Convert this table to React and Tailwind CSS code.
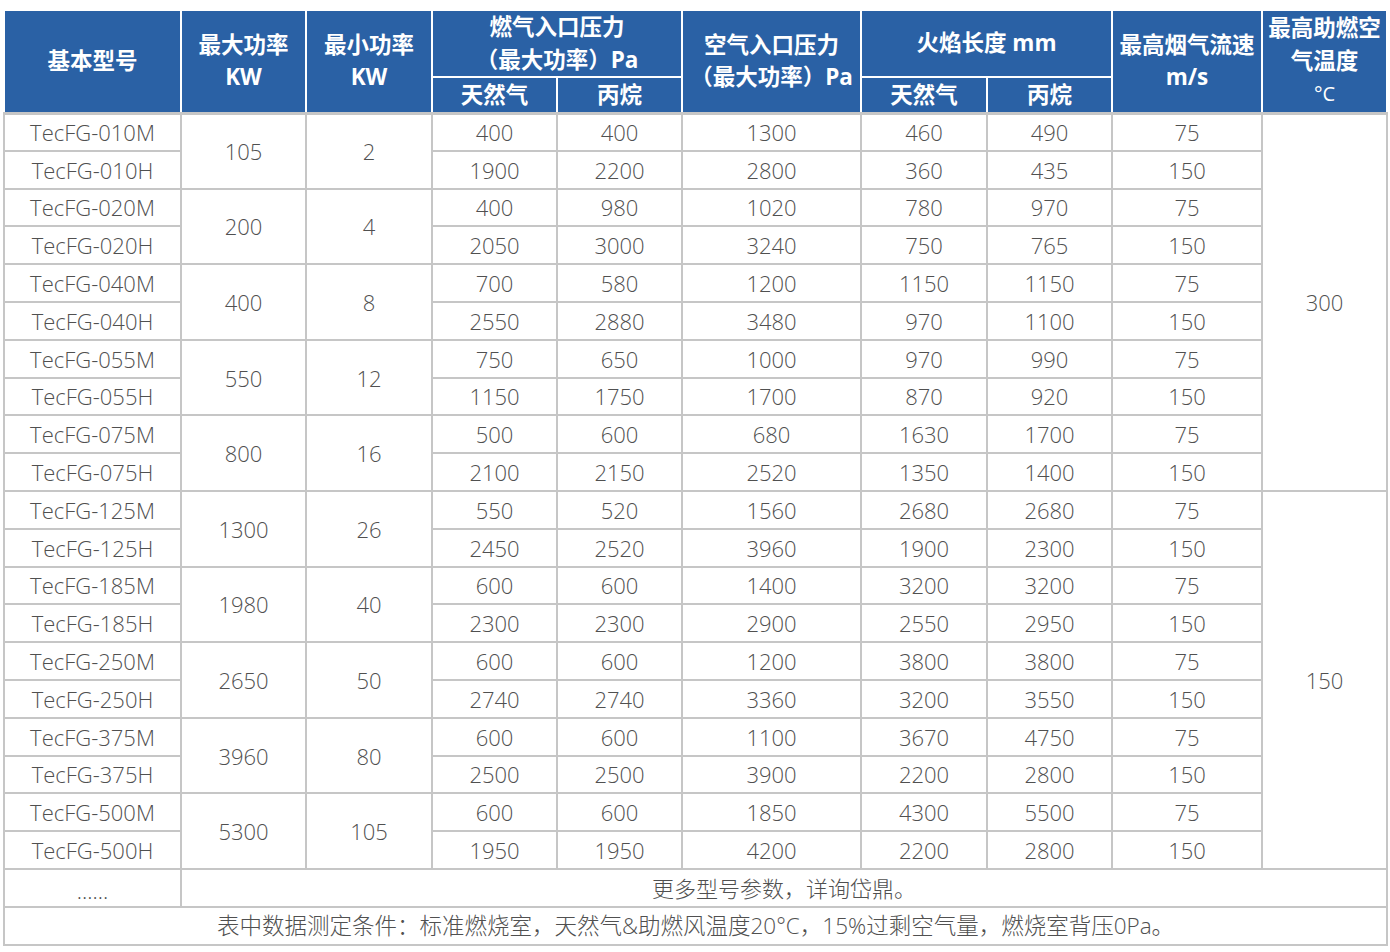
import React from 'react'

const groups = [
  { kwMax: '105', kwMin: '2', rows: [
    ['TecFG-010M', '400', '400', '1300', '460', '490', '75'],
    ['TecFG-010H', '1900', '2200', '2800', '360', '435', '150'],
  ] },
  { kwMax: '200', kwMin: '4', rows: [
    ['TecFG-020M', '400', '980', '1020', '780', '970', '75'],
    ['TecFG-020H', '2050', '3000', '3240', '750', '765', '150'],
  ] },
  { kwMax: '400', kwMin: '8', rows: [
    ['TecFG-040M', '700', '580', '1200', '1150', '1150', '75'],
    ['TecFG-040H', '2550', '2880', '3480', '970', '1100', '150'],
  ] },
  { kwMax: '550', kwMin: '12', rows: [
    ['TecFG-055M', '750', '650', '1000', '970', '990', '75'],
    ['TecFG-055H', '1150', '1750', '1700', '870', '920', '150'],
  ] },
  { kwMax: '800', kwMin: '16', rows: [
    ['TecFG-075M', '500', '600', '680', '1630', '1700', '75'],
    ['TecFG-075H', '2100', '2150', '2520', '1350', '1400', '150'],
  ] },
  { kwMax: '1300', kwMin: '26', rows: [
    ['TecFG-125M', '550', '520', '1560', '2680', '2680', '75'],
    ['TecFG-125H', '2450', '2520', '3960', '1900', '2300', '150'],
  ] },
  { kwMax: '1980', kwMin: '40', rows: [
    ['TecFG-185M', '600', '600', '1400', '3200', '3200', '75'],
    ['TecFG-185H', '2300', '2300', '2900', '2550', '2950', '150'],
  ] },
  { kwMax: '2650', kwMin: '50', rows: [
    ['TecFG-250M', '600', '600', '1200', '3800', '3800', '75'],
    ['TecFG-250H', '2740', '2740', '3360', '3200', '3550', '150'],
  ] },
  { kwMax: '3960', kwMin: '80', rows: [
    ['TecFG-375M', '600', '600', '1100', '3670', '4750', '75'],
    ['TecFG-375H', '2500', '2500', '3900', '2200', '2800', '150'],
  ] },
  { kwMax: '5300', kwMin: '105', rows: [
    ['TecFG-500M', '600', '600', '1850', '4300', '5500', '75'],
    ['TecFG-500H', '1950', '1950', '4200', '2200', '2800', '150'],
  ] },
]

const th = 'border-2 border-white bg-[#2a61a5] text-white font-bold text-[22.5px] leading-[32.5px] p-0 align-middle'
const td = 'border-2 border-[#c6c6c6] p-0 text-center align-middle leading-[24px]'

export default function App() {
  return (
    <div className="bg-white w-[1390px] h-[952px] pt-[9px] pl-[3px]">
      <table
        className="table-fixed border-collapse w-[1383px] text-[#505050] text-[22px] font-light"
        style={{ fontFamily: '"Open Sans", "Noto Sans CJK SC", sans-serif' }}
      >
        <colgroup>
          <col className="w-[177px]" />
          <col className="w-[125px]" />
          <col className="w-[126px]" />
          <col className="w-[125px]" />
          <col className="w-[125px]" />
          <col className="w-[179px]" />
          <col className="w-[126px]" />
          <col className="w-[125px]" />
          <col className="w-[150px]" />
          <col className="w-[125px]" />
        </colgroup>
        <thead className="border-b-[3px] border-[#c6c6c6]">
          <tr className="h-[64px]">
            <th rowSpan={2} className={th}>基本型号</th>
            <th rowSpan={2} className={th}>最大功率<br />KW</th>
            <th rowSpan={2} className={th}>最小功率<br />KW</th>
            <th colSpan={2} className={th}>燃气入口压力<br />（最大功率）Pa</th>
            <th rowSpan={2} className={th}>空气入口压力<br />（最大功率）Pa</th>
            <th colSpan={2} className={th}>火焰长度 mm</th>
            <th rowSpan={2} className={th}>最高烟气流速<br />m/s</th>
            <th rowSpan={2} className={th}>
              最高助燃空<br />气温度<br />
              <span className="font-normal text-[20px]">°C</span>
            </th>
          </tr>
          <tr className="h-[36px]">
            <th className={th}>天然气</th>
            <th className={th}>丙烷</th>
            <th className={th}>天然气</th>
            <th className={th}>丙烷</th>
          </tr>
        </thead>
        <tbody>
          {groups.map((g, gi) =>
            g.rows.map((r, ri) => (
              <tr key={r[0]} className="h-[37.8px]">
                <td className={td}>{r[0]}</td>
                {ri === 0 && (
                  <>
                    <td rowSpan={2} className={td}>{g.kwMax}</td>
                    <td rowSpan={2} className={td}>{g.kwMin}</td>
                  </>
                )}
                {r.slice(1).map((v, i) => (
                  <td key={i} className={td}>{v}</td>
                ))}
                {ri === 0 && (gi === 0 || gi === 5) && (
                  <td rowSpan={10} className={td}>{gi === 0 ? '300' : '150'}</td>
                )}
              </tr>
            ))
          )}
          <tr className="h-[37.8px]">
            <td className={`${td} pt-1`}>......</td>
            <td colSpan={9} className={td}>更多型号参数，详询岱鼎。</td>
          </tr>
          <tr className="h-[37.8px]">
            <td colSpan={10} className={`${td} text-[22.5px]`}>
              表中数据测定条件：标准燃烧室，天然气&amp;助燃风温度20°C，15%过剩空气量，燃烧室背压0Pa。
            </td>
          </tr>
        </tbody>
      </table>
    </div>
  )
}
